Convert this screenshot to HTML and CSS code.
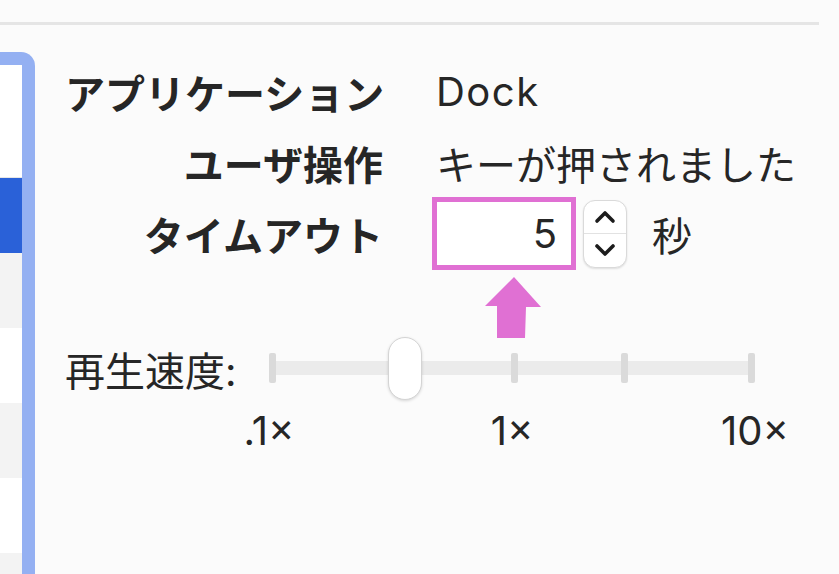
FILE: index.html
```html
<!DOCTYPE html>
<html>

<head>
  <meta name="viewport" content="width=device-width, initial-scale=1">
  <link rel="stylesheet" href="styles.css">
</head>

<body>
  <div class="topline"></div>

  <div class="main">
    <!-- focused list on the left, only its edge is visible -->
    <div class="sidebar">
      <div class="row blank"></div>
      <div class="row selected"></div>
      <div class="row odd"></div>
      <div class="row"></div>
      <div class="row odd"></div>
      <div class="row"></div>
      <div class="row odd"></div>
    </div>

    <div class="panel">
      <div class="fields">
        <div class="label">アプリケーション</div>
        <div class="value"><span class="latin">Dock</span></div>

        <div class="label">ユーザ操作</div>
        <div class="value">キーが押されました</div>

        <div class="label">タイムアウト</div>
        <div class="value timeout">
          <div class="numbox">
            5
            <svg class="arrow" width="57" height="62" viewBox="0 0 57 62">
              <polygon points="29,0 56,30 41,30 40,61 12,61 12,29 0,29" fill="#e070d3" />
            </svg>
          </div>
          <div class="stepper">
            <div class="step">
              <svg width="22" height="14" viewBox="0 0 22 14">
                <path d="M3 11 L11 3 L19 11" fill="none" stroke="#1c1c1c" stroke-width="3.6" stroke-linecap="round" stroke-linejoin="round" />
              </svg>
            </div>
            <div class="step">
              <svg width="22" height="14" viewBox="0 0 22 14">
                <path d="M3 3 L11 11 L19 3" fill="none" stroke="#1c1c1c" stroke-width="3.6" stroke-linecap="round" stroke-linejoin="round" />
              </svg>
            </div>
          </div>
          <span class="unit">秒</span>
        </div>
      </div>

      <div class="speed">
        <div class="speed-label">再生速度:</div>
        <div class="slider">
          <div class="track"></div>
          <div class="tick" style="left: 0px"></div>
          <div class="tick" style="left: 242px"></div>
          <div class="tick" style="left: 352px"></div>
          <div class="tick" style="left: 479px"></div>
          <div class="knob"></div>
          <span class="mark" style="left: 0px">.1×</span>
          <span class="mark" style="left: 243px">1×</span>
          <span class="mark" style="left: 486px">10×</span>
        </div>
      </div>
    </div>
  </div>
</body>

</html>
```

FILE: styles.css
```css
* {
  box-sizing: border-box;
}

body {
  margin: 0;
  background-color: #fbfbfb;
  font-family: Inter, "Noto Sans CJK JP", sans-serif;
  font-size: 40px;
  color: #262626;
  overflow: hidden;
}

/* Thin separator on top */
.topline {
  margin-top: 22px;
  width: 819px;
  height: 3px;
  background-color: #e5e5e5;
}

.main {
  display: flex;
  align-items: flex-start;
}

/* Focus ring around the list */
.sidebar {
  margin-top: 27px;
  width: 35px;
  height: 522px;
  overflow: hidden;
  border-top: 13px solid #94b0f2;
  border-right: 13px solid #94b0f2;
  border-top-right-radius: 14px;
  background-color: #ffffff;
  display: flex;
  flex-direction: column;
}

.row {
  height: 75px;
  flex-shrink: 0;
  background-color: #ffffff;
}

.row.blank {
  height: 113px;
  border-bottom: 1px solid #e6e6e6;
}

.row.odd {
  background-color: #f3f3f3;
}

.row.selected {
  background-color: #2a61d8;
}

.panel {
  padding-left: 30px;
  padding-top: 31px;
}

.fields {
  display: grid;
  grid-template-columns: 318px auto;
  grid-auto-rows: 71px;
  column-gap: 53px;
  align-items: center;
}

.label {
  font-weight: 700;
  text-align: right;
  white-space: nowrap;
}

.value {
  white-space: nowrap;
}

.latin {
  letter-spacing: 1.5px;
}

.timeout {
  display: flex;
  align-items: center;
  margin-left: -4px;
}

/* Number field, highlighted in pink */
.numbox {
  position: relative;
  width: 144px;
  height: 73px;
  border: 5px solid #e070d3;
  background-color: #ffffff;
  padding-right: 14px;
  text-align: right;
  line-height: 63px;
}

.arrow {
  position: absolute;
  left: 48px;
  top: 75px;
}

.stepper {
  margin-left: 7px;
  width: 44px;
  height: 68px;
  border: 1px solid #dadada;
  border-radius: 12px;
  background-color: #ffffff;
  box-shadow: 0 1px 2px rgba(0, 0, 0, 0.12);
  display: flex;
  flex-direction: column;
}

.step {
  flex: 1;
  display: flex;
  align-items: center;
  justify-content: center;
}

.step + .step {
  border-top: 1px solid #e2e2e2;
}

.unit {
  margin-left: 25px;
}

/* Playback speed slider */
.speed {
  display: flex;
  align-items: center;
  margin-top: 68px;
}

.speed-label {
  width: 204px;
}

.slider {
  position: relative;
  width: 486px;
  height: 63px;
}

.track {
  position: absolute;
  left: 0;
  right: 0;
  top: 24px;
  height: 14px;
  background-color: #ebebeb;
}

.tick {
  position: absolute;
  top: 16px;
  width: 7px;
  height: 30px;
  border-radius: 2px;
  background-color: #dadada;
}

.knob {
  position: absolute;
  left: 119px;
  top: 0;
  width: 34px;
  height: 63px;
  border-radius: 17px;
  background-color: #ffffff;
  border: 1px solid #d4d4d4;
  box-shadow: 0 1px 3px rgba(0, 0, 0, 0.15);
}

.mark {
  position: absolute;
  top: 70px;
  line-height: 48px;
  transform: translateX(-50%);
  white-space: nowrap;
}
```
